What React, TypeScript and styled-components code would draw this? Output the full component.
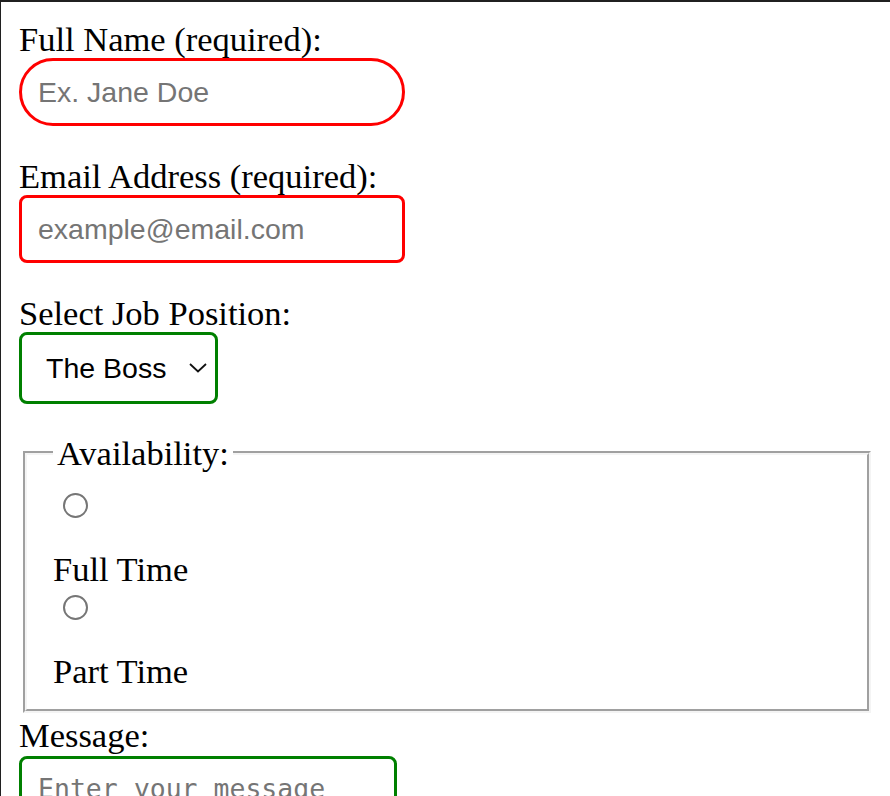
import { createGlobalStyle, styled } from 'styled-components';

const GlobalStyle = createGlobalStyle`
	html,
	body {
		margin: 0;
		padding: 0;
		background: #ffffff;
	}
`;

const COLORS = {
	frame: '#202020',
	text: '#000000',
	placeholder: '#757575',
	invalid: '#ff0000',
	valid: '#008000',
	radio: '#767676',
	groove: '#f4f4f4',
};

const App = () => {
	return (
		<>
			<GlobalStyle />
			<Page>
				<Form onSubmit={(e) => e.preventDefault()}>
					<Label htmlFor="name">Full Name (required):</Label>
					<TextInput id="name" type="text" placeholder="Ex. Jane Doe" $pill required />

					<Label htmlFor="email">Email Address (required):</Label>
					<TextInput id="email" type="email" placeholder="example@email.com" required />

					<Label htmlFor="position">Select Job Position:</Label>
					<SelectWrapper>
						<Select id="position" defaultValue="boss">
							<option value="boss">The Boss</option>
							<option value="dev">Developer</option>
							<option value="design">Designer</option>
						</Select>
						<Chevron width="18" height="10" viewBox="0 0 18 10" aria-hidden="true">
							<path d="M1 1 L9 8.5 L17 1" fill="none" stroke="#111" strokeWidth="1.8" />
						</Chevron>
					</SelectWrapper>

					<Fieldset>
						<Legend>Availability:</Legend>
						<Option>
							<Radio type="radio" id="full" name="availability" value="full" />
							<OptionLabel htmlFor="full">Full Time</OptionLabel>
						</Option>
						<Option>
							<Radio type="radio" id="part" name="availability" value="part" />
							<OptionLabel htmlFor="part">Part Time</OptionLabel>
						</Option>
					</Fieldset>

					<Label htmlFor="message">Message:</Label>
					<MessageArea id="message" placeholder="Enter your message" />
				</Form>
			</Page>
		</>
	);
};

export default App;

const Page = styled.main`
	box-sizing: border-box;
	min-height: 100vh;
	padding: 18px 17px 0 18px;
	border-top: 2px solid ${COLORS.frame};
	border-left: 1px solid ${COLORS.frame};
	overflow: hidden;
`;

const Form = styled.form`
	display: flex;
	flex-direction: column;
	align-items: flex-start;
`;

const serif = `font-family: 'Liberation Serif', 'Times New Roman', serif;`;
const sans = `font-family: 'Liberation Sans', Arial, sans-serif;`;

const Label = styled.label`
	${serif};
	display: block;
	font-size: 34.5px;
	line-height: 38px;
	color: ${COLORS.text};
`;

const TextInput = styled.input<{ $pill?: boolean }>`
	${sans};
	box-sizing: border-box;
	width: 386px;
	height: 68px;
	margin: 0 0 31px;
	padding: 0 16px;
	font-size: 28.5px;
	color: ${COLORS.text};
	background: #ffffff;
	border: 3px solid ${COLORS.invalid};
	border-radius: ${(p) => (p.$pill ? '34px' : '8px')};
	outline: none;

	&::placeholder {
		color: ${COLORS.placeholder};
	}
`;

const SelectWrapper = styled.div`
	position: relative;
	margin-bottom: 30px;
`;

const Select = styled.select`
	${sans};
	box-sizing: border-box;
	width: 199px;
	height: 72px;
	padding: 0 40px 0 24px;
	font-size: 28.5px;
	color: ${COLORS.text};
	background: #ffffff;
	border: 3px solid ${COLORS.valid};
	border-radius: 8px;
	appearance: none;
	outline: none;
`;

const Chevron = styled.svg`
	position: absolute;
	top: 31px;
	left: 170px;
	pointer-events: none;
`;

const Fieldset = styled.fieldset`
	box-sizing: border-box;
	align-self: stretch;
	margin: 0 2px 3px 4px;
	padding: 21px 26px 19px;
	border: 4px groove ${COLORS.groove};
	min-inline-size: 0;
`;

const Legend = styled.legend`
	${serif};
	padding: 0 4px;
	font-size: 34.5px;
	line-height: 38px;
	color: ${COLORS.text};
`;

const Option = styled.div`
	display: flex;
	flex-direction: column;
	align-items: flex-start;

	& + & {
		margin-top: 7px;
	}
`;

const Radio = styled.input`
	box-sizing: border-box;
	width: 25px;
	height: 25px;
	margin: 0 0 0 10px;
	border: 2px solid ${COLORS.radio};
	border-radius: 50%;
	background: #ffffff;
	appearance: none;

	&:checked {
		background: radial-gradient(circle, #0075ff 0 45%, #ffffff 50%);
		border-color: #0075ff;
	}
`;

const OptionLabel = styled.label`
	${serif};
	display: block;
	margin-top: 32px;
	font-size: 34.5px;
	line-height: 38px;
	color: ${COLORS.text};
`;

const MessageArea = styled.textarea`
	box-sizing: border-box;
	width: 378px;
	height: 130px;
	margin-top: 2px;
	padding: 14px 16px;
	font-family: 'DejaVu Sans Mono', 'Liberation Mono', monospace;
	font-size: 26.5px;
	color: ${COLORS.text};
	border: 3px solid ${COLORS.valid};
	border-radius: 8px;
	resize: none;
	outline: none;

	&::placeholder {
		color: ${COLORS.placeholder};
	}
`;
